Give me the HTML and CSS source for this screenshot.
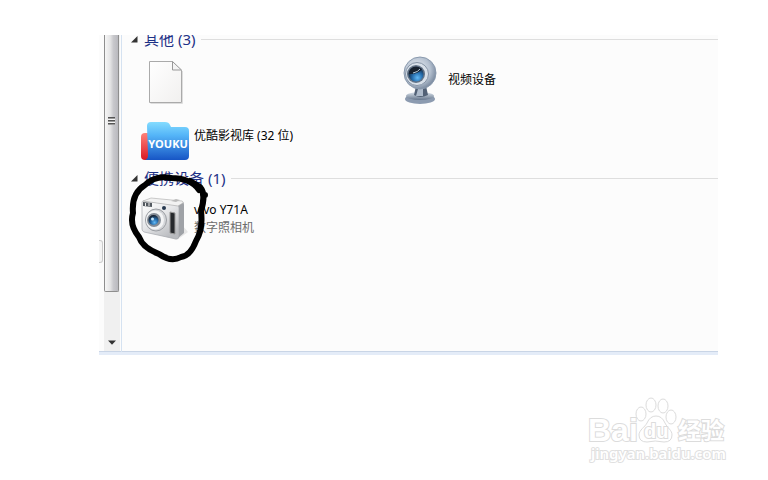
FILE: index.html
```html
<!DOCTYPE html>
<html lang="zh-CN">
<head>
<meta charset="utf-8">
<title>计算机</title>
<link rel="stylesheet" href="styles.css">
</head>
<body>
<main class="window">
  <div class="gutter"><span class="gutter-thumb"></span></div>
  <div class="scrollbar">
    <div class="thumb"><span class="grip"></span></div>
    <button class="scroll-down" type="button" aria-label="向下滚动"><svg width="8" height="5" viewBox="0 0 8 5"><path d="M0 0.500h8L4 4.800z" fill="#333"/></svg></button>
  </div>
  <div class="content">
    <section class="group">
      <h2 class="group-title"><svg class="arrow" width="7" height="7" viewBox="0 0 7 7"><path d="M6.500 0v6.500H0z" fill="#333"/></svg><span>其他 (3)</span></h2>
      <ul class="tiles">
        <li class="tile">
          <svg class="icon" viewBox="0 0 48 48">
            <defs><linearGradient id="paper" x2="1" y2="1"><stop stop-color="#fff"/><stop offset="1" stop-color="#f1f0ef"/></linearGradient></defs>
            <path d="M9.500 47.500h32V15" fill="none" stroke="#ddd"/>
            <path d="M8.500 5.500h23l9 9v32h-32z" fill="url(#paper)" stroke="#aaa"/>
            <path d="M31.500 5.500v8.500h9z" fill="#f4f4f4" stroke="#999"/>
          </svg>
        </li>
        <li class="tile">
          <svg class="icon icon-narrow" viewBox="0 0 40 48">
            <defs>
              <radialGradient id="ball" cx=".4" cy=".4" r=".65"><stop stop-color="#eef2f7"/><stop offset=".65" stop-color="#b5c1d0"/><stop offset="1" stop-color="#74849a"/></radialGradient>
              <linearGradient id="stand" x2="0" y2="1"><stop stop-color="#dce4ed"/><stop offset="1" stop-color="#64758b"/></linearGradient>
              <radialGradient id="lens" cx=".6" cy=".75" r=".7"><stop stop-color="#62b9f5"/><stop offset=".5" stop-color="#246baa"/><stop offset="1" stop-color="#172333"/></radialGradient>
            </defs>
            <ellipse cx="17" cy="43" rx="15" ry="5" fill="#8c9bb0"/>
            <ellipse cx="17" cy="40" rx="14" ry="4" fill="url(#stand)"/>
            <path d="M13 30h10l2 9q-8 4-14 0z" fill="#526176"/>
            <path d="M15 33h5v7h-7z" fill="#aebbcb"/>
            <circle cx="17" cy="17" r="16" fill="url(#ball)" stroke="#8a9aae"/>
            <circle cx="14" cy="18" r="11.500" fill="#d8e0e9" stroke="#8694a6"/>
            <circle cx="13" cy="18" r="9" fill="#627286"/>
            <circle cx="13" cy="18" r="7.500" fill="url(#lens)"/>
            <path d="M6 18q1-7 8-7l5 2q-3 5-13 5z" fill="#17212e"/>
            <path d="M10 17q5-1 7-4" fill="none" stroke="#b9cede"/>
          </svg>
          <div class="label">视频设备</div>
        </li>
        <li class="tile tile-raised">
          <svg class="icon" viewBox="0 0 48 48">
            <defs>
              <linearGradient id="folder" x2="0" y2="1"><stop stop-color="#84dcff"/><stop offset=".35" stop-color="#54b5f8"/><stop offset="1" stop-color="#1755c5"/></linearGradient>
              <linearGradient id="red" x2="0" y2="1"><stop stop-color="#ff8178"/><stop offset="1" stop-color="#d91825"/></linearGradient>
            </defs>
            <rect y="16" width="14" height="27" rx="4" fill="url(#red)"/>
            <path d="M6 9q0-4 4-4h14q4 0 5 3l1 2h14q4 0 4 4v25q0 4-4 4H4q3-1 3-5z" fill="url(#folder)"/>
            <text x="27" y="31" class="youku" text-anchor="middle">YOUKU</text>
          </svg>
          <div class="label">优酷影视库 (32 位)</div>
        </li>
      </ul>
    </section>
    <section class="group">
      <h2 class="group-title"><svg class="arrow" width="7" height="7" viewBox="0 0 7 7"><path d="M6.500 0v6.500H0z" fill="#333"/></svg><span>便携设备 (1)</span></h2>
      <ul class="tiles">
        <li class="tile">
          <svg class="icon" viewBox="0 0 48 48">
            <defs><linearGradient id="body" x2=".7" y2="1"><stop stop-color="#fff"/><stop offset=".5" stop-color="#e6e7e9"/><stop offset="1" stop-color="#b8babe"/></linearGradient></defs>
            <path d="M6 37l30 8 11-8-6-7z" fill="#e6e6e6"/>
            <path d="M36 9l5-2q2 0 2 3v28l-6 5z" fill="#9fa2a7"/>
            <path d="M2 6l34 4q2 0 2 3v28q0 3-3 3L3 37q-2-1-2-3V8q0-2 1-2z" fill="url(#body)" stroke="#a5a8ad" stroke-width=".7"/>
            <path d="M2 6l8-3 31 3q2 1 1 2l-5 3z" fill="#f2f2f2" stroke="#aaa" stroke-width=".6"/>
            <path d="M30 6l5-2 4 1-4 2z" fill="#bbb"/>
            <path d="M2 7l9 1v4l-9-1z" fill="#535960"/><path d="M4.500 8v3M8 8v3" stroke="#eee"/>
            <circle cx="23" cy="13" r="2" fill="#26384e"/>
            <path d="M29 17l5 1v21l-5-1z" fill="#26292d" stroke="#999"/>
            <ellipse cx="15" cy="25" rx="10.500" ry="11" fill="#d3d5d8" stroke="#9b9ea3"/>
            <ellipse cx="14" cy="25" rx="9" ry="9.500" fill="#f3f4f5"/>
            <circle cx="13" cy="25" r="7" fill="#838b95"/>
            <circle cx="12.500" cy="25" r="5" fill="url(#lens)"/>
            <circle cx="11.500" cy="24" r="1.500" fill="#c3e4fa"/>
          </svg>
          <div class="label">vivo Y71A<br><span class="detail">数字照相机</span></div>
          <svg class="scribble" viewBox="0 0 80 90"><path d="M71 19C66 11 55 7 43 7C34 5 24 7 17 14C7 20 4 31 5 42C2 52 6 60 11 66C14 75 23 80 31 83C38 88 46 90 53 86C61 85 65 78 68 70C74 60 74 48 73 40C76 30 77 22 72 16L62 10M75 24l2 0" fill="none" stroke="#000" stroke-width="6" stroke-linecap="round" stroke-linejoin="round"/></svg>
        </li>
      </ul>
    </section>
  </div>
</main>
<footer class="watermark">
  <svg width="144" height="72" viewBox="0 0 144 72" role="img" aria-label="Baidu 经验">
    <g class="outline">
      <ellipse cx="57" cy="21" rx="5" ry="7"/><ellipse cx="67" cy="12" rx="5" ry="7"/><ellipse cx="79" cy="13" rx="5" ry="7"/><ellipse cx="87" cy="24" rx="5" ry="7"/>
      <path d="M72 23q6 0 9 7c3 6 7 7 7 12q0 7-8 7-9-2-17 0-8 0-8-7c0-5 6-8 8-12q3-7 9-7z"/>
      <text x="4" y="48" class="brand">Bai</text>
      <text x="60" y="45" class="du">du</text>
      <text x="94" y="46" class="cn">经验</text>
    </g>
    <text x="7" y="66" class="site">jingyan.baidu.com</text>
  </svg>
</footer>
</body>
</html>
```
FILE: styles.css
```css
* {
  box-sizing: border-box;
}

body {
  margin: 0;
  padding: 35px 50px 0 99px;
  background: #fff;
  color: #000;
  font: 12px/18px "Noto Sans", "Noto Sans CJK SC", sans-serif;
}

.window {
  display: flex;
  min-height: 320px;
  overflow: hidden;
  background: #fcfcfc;
  border-bottom: 3px solid #e4ecf8;
  box-shadow: inset 0 -1px #c9d5e6;
}

.gutter {
  display: flex;
  flex: 0 0 5px;
  align-items: flex-end;
  padding-bottom: 89px;
}

.gutter-thumb {
  width: 4px;
  height: 23px;
  border: 1px solid #ccc;
  border-left: 0;
  border-radius: 0 3px 3px 0;
  background: #f5f5f5;
}

.scrollbar {
  display: flex;
  flex: 0 0 16px;
  flex-direction: column;
  margin-bottom: 1px;
  background: #f0f0f0;
}

.thumb {
  flex: 1;
  width: 15px;
  padding: 82px 3px 0;
  border: 1px solid #8e8e8e;
  border-top: 0;
  border-radius: 0 0 2px 2px;
  background: linear-gradient(90deg, #f6f6f6, #e4e4e5 40%, #c8c8cc 65%, #b9b9be);
}

.grip {
  display: block;
  width: 7px;
  height: 8px;
  background: repeating-linear-gradient(#555 0 1px, #999 1px 2px, #f4f4f4 2px 3px);
}

.scroll-down {
  height: 59px;
  padding: 42px 0 0;
  border: 0;
  background: none;
  line-height: 0;
}

.content {
  flex: 1;
  min-width: 0;
  margin-left: 1px;
  border-left: 1px solid #d5e2f1;
}

.group:first-child {
  margin-top: -6px;
}

.group-title {
  display: flex;
  align-items: center;
  gap: 6px;
  margin: 0;
  padding-left: 9px;
  color: #1e3287;
  font-size: 15px;
  font-weight: 400;
  line-height: 20px;
}

.group-title::after {
  flex: 1;
  height: 1px;
  background: #dedede;
  content: "";
}

.tiles {
  display: grid;
  grid-template-columns: 262px 1fr;
  gap: 13px 0;
  margin: 0;
  padding: 7px 0 3px 19px;
  list-style: none;
}

.tile {
  position: relative;
  display: flex;
  align-items: center;
  gap: 5px;
}

.tile-raised {
  align-items: flex-start;
}

.tile-raised .label {
  padding-top: 10px;
}

.icon {
  flex: none;
  width: 48px;
  height: 48px;
  overflow: visible;
}

.icon-narrow {
  width: 40px;
}

.detail {
  color: #6d6d6d;
}

.youku {
  fill: #fff;
  font: 700 11px "Open Sans", sans-serif;
}

.scribble {
  position: absolute;
  top: -24px;
  left: -13px;
  width: 80px;
  height: 90px;
  overflow: visible;
}

.watermark {
  display: flex;
  justify-content: flex-end;
  margin: 38px -10px 0 0;
}

.outline {
  fill: #fff;
  stroke: #dcdcdc;
  stroke-width: 1;
}

.outline text {
  stroke-width: 2;
  paint-order: stroke;
}

.brand {
  font: 700 32px "Liberation Sans", sans-serif;
}

.du {
  font: 700 20px "Liberation Sans", sans-serif;
}

.cn {
  font: 700 23px "Noto Sans CJK SC", sans-serif;
}

.site {
  fill: #fff;
  stroke: #e0e0e0;
  stroke-width: 2;
  paint-order: stroke;
  font: 600 15px "Noto Sans", sans-serif;
}
```
